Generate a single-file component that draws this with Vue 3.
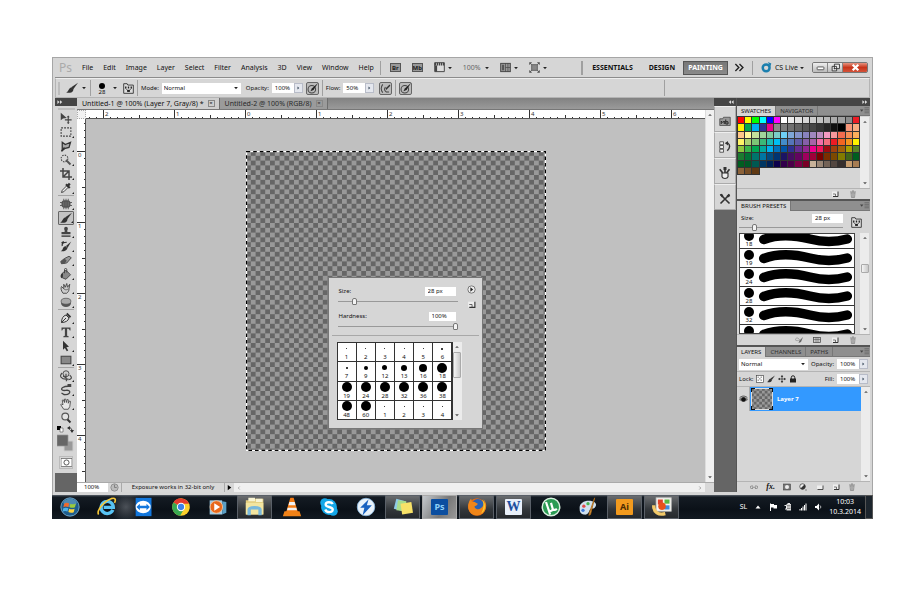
<script setup>
import { ref, computed, onMounted, onBeforeUnmount } from 'vue'

const arrow = '<path d="M3 5h10l-5 6z" fill="#222"/>'
const icons = {
  arrow,
  right: '<path d="M4 2l7 6-7 6z" fill="#345"/>',
  move: '<path d="M1 1v10l3-2.500 5-.5z" fill="#444"/><path d="M11 6v9M6.500 10.500h9" stroke="#444" stroke-width="1.500"/><path d="M9 7l2-2.500L13 7zM9 14l2 2 2-2z" fill="#444"/>',
  marquee: '<rect x="1.500" y="2.500" width="13" height="11" fill="none" stroke="#444" stroke-width="1.400" stroke-dasharray="2.500 1.500"/>',
  lasso: '<path d="M3 14V3l4 3 7-3-2 7-5 1z" fill="#aaa" stroke="#333" stroke-width="1.700"/><path d="M2 15l4-5" stroke="#333" stroke-width="2"/>',
  wand: '<circle cx="6" cy="6" r="4.500" fill="none" stroke="#444" stroke-width="1.400" stroke-dasharray="2 1.500"/><path d="M8 8l6 6" stroke="#555" stroke-width="2.600"/>',
  crop: '<path d="M4 0v12h12M0 4h12v12M12 4L4 12" fill="none" stroke="#444" stroke-width="2"/>',
  dropper: '<path d="M2 14l1-3 6-6 2 2-6 6z" fill="#eee" stroke="#333" stroke-width="1.200"/><path d="M8 3l5 5M10 6l3-4" stroke="#333" stroke-width="3"/>',
  heal: '<rect x="2" y="3" width="12" height="10" rx="4" fill="#555"/><path d="M5 1v14M8 1v14M11 1v14M0 6h16M0 10h16" stroke="#555" stroke-width="1.200"/><path d="M5 5v6M8 5v6M11 5v6" stroke="#888" stroke-width=".7"/>',
  brush: '<path d="M16 1L7 7l2.500 3z" fill="#333"/><path d="M0 14c3-.5 3-5 6-6.500 3-.5 4.500 2 3.500 4C8 14.500 4 15 0 14z" fill="#333"/>',
  stamp: '<path d="M6 8c1-2-.5-3-.5-4.500a2.500 2.500 0 015 0C10.500 5 9 6 10 8h4v3H2V8z" fill="#444"/><path d="M2 13.500h12" stroke="#444" stroke-width="2"/>',
  history: '<path d="M15 2L8 8l2 2.500z" fill="#333"/><path d="M1 15c3-1 2-5 6-7l3 2.500c-1 3-4 5-9 4.500z" fill="#333"/><path d="M3 8c-1-4 2-5 6-5M2 4l3-2" fill="none" stroke="#333" stroke-width="1.600"/>',
  eraser: '<path d="M6 6L12 3l3 2-6 7-7 1-1-3z" fill="#999" stroke="#444" stroke-width="1.200"/><path d="M1 10l5-4 3 3-3 4H2z" fill="#555"/>',
  bucket: '<path d="M3 7l5-4 6 6-6 6-5-2z" fill="#888" stroke="#444" stroke-width="1.200"/><path d="M4 7c-3 0-4 4-2.500 6S4 11 4 7z" fill="#333"/><path d="M6 7V2c0-2 3-2 3 0v4" fill="none" stroke="#444" stroke-width="1.300"/>',
  smudge: '<path d="M4 15c-3-4-3-7-2-9l3 3V3l2 4 2-5 1 5 3-4-1 6c0 3-1 4-3 6z" fill="#ccc" stroke="#444" stroke-width="1.200"/><path d="M5 9c2 2 4 2 6 0" stroke="#555" fill="none"/>',
  sponge: '<ellipse cx="8" cy="10" rx="6.500" ry="4.500" fill="#555"/><ellipse cx="8" cy="7" rx="6.500" ry="4" fill="#aaa" stroke="#555"/>',
  pen: '<path d="M2 14c0-5 2-9 6-10l4 4c-1 4-5 6-10 6zM2 14l6-6" fill="#ddd" stroke="#333" stroke-width="1.300"/><path d="M9 2l5 5" stroke="#333" stroke-width="2.400"/>',
  type: '<path d="M2 2h12v4h-1c-.5-2-1-2.500-3.500-2.500V13l2 .5V15h-7v-1.500l2-.5V3.500C4 3.500 3.500 4 3 6H2z" fill="#444"/>',
  pick: '<path d="M4 1l8 8-3.500.5L11 14l-2 1-2.500-4.500L4 13z" fill="#333"/>',
  rect: '<rect x="1.500" y="3" width="13" height="10" fill="#888" stroke="#444" stroke-width="1.400"/>',
  orbit: '<circle cx="8" cy="5" r="4" fill="#ccc" stroke="#444" stroke-width="1.200"/><path d="M3 4C-2 8 2 13 10 12l-2 3M13 7c4 3 2 6-2 6M4 8l5 3M8 5v4" fill="none" stroke="#444" stroke-width="1.500"/>',
  camera: '<path d="M11 3C5 3 0 6 3 8s6-1 9 1-1 6-6 5M2 12l4 2.500" fill="none" stroke="#444" stroke-width="1.700"/><path d="M10 0h5v4h-5z" fill="#444"/>',
  hand: '<path d="M5 15L1 9l1-1 2 1-1-6 1.500-.5L6 6V1.500h1.700L8.500 6l1-4 1.500.3V7l1.500-3 1.500.5-1 7-2 3.500z" fill="#e8e8e8" stroke="#444" stroke-width="1.100"/>',
  zoom: '<circle cx="7" cy="6" r="4.500" fill="#e4e4e4" stroke="#555" stroke-width="1.500"/><path d="M10 10l4 4" stroke="#333" stroke-width="2.600"/>',
  mask: '<rect x="0" y="2" width="16" height="12" fill="#fff" stroke="#555"/><circle cx="8" cy="8" r="3.700" fill="#fff" stroke="#555" stroke-width="1.400"/>',
  presets: '<path d="M1 1h5l1 2h8v12H1z" fill="#ddd" stroke="#333" stroke-width="1.300"/><path d="M4 5v3M8 5v3M12 5v3" stroke="#222" stroke-width="2"/><path d="M4 8l3 3M12 8l-3 3" stroke="#222"/><rect x="6" y="10" width="4" height="3" fill="#222"/>',
  tablet: '<circle cx="7" cy="9" r="5.500" fill="none" stroke="#444" stroke-width="1.500"/><path d="M16 0L7 8l-2 4 4.500-2z" fill="#222"/>',
  air: '<path d="M4 2c-3 4-3 8 0 12M8 6c-2 2-2 5 1 7h4" fill="none" stroke="#444" stroke-width="1.500"/><path d="M14 2L8 8l1 2 6-6z" fill="#333"/>',
  film: '<path d="M1 1h14v13H1z" fill="#ddd" stroke="#444" stroke-width="1.400"/><path d="M1 3h14" stroke="#444" stroke-width="4" stroke-dasharray="2 1"/><path d="M3 5v9" stroke="#444" stroke-width="3"/>',
  arrange: '<rect x="1" y="2" width="14" height="12" fill="#999" stroke="#444" stroke-width="1.400"/><path d="M8 2v12M11.500 2v12M8 8h7" stroke="#444"/><path d="M3 4h3v8H3z" fill="#555"/>',
  screen: '<rect x="4" y="4" width="8" height="8" fill="#888" stroke="#444"/><path d="M1 4V1h3M12 1h3v3M15 12v3h-3M4 15H1v-3M1 1l3 3M15 1l-3 3M1 15l3-3M15 15l-3-3" fill="none" stroke="#444" stroke-width="1.200"/>',
  live: '<circle cx="7.500" cy="8.500" r="5" fill="none" stroke="#1b7fae" stroke-width="3.600"/><path d="M10 0l5 2-1.500 5z" fill="#1b7fae"/>',
  bridge: '<path d="M1 5h4l1-2h9v11H1z" fill="#999" stroke="#444"/><path d="M3 12V8l2 2 2-2v4M9 6v6h3V9H9" fill="none" stroke="#222" stroke-width="1.300"/>',
  clone: '<path d="M1 1h5v4H1zM1 6h5v4H1zM1 11h5v4H1z" fill="#eee" stroke="#333"/><path d="M9 3h3c3 2 3 6-1 10" fill="none" stroke="#333" stroke-width="1.900"/><path d="M8 3l4-3v6z" fill="#333"/>',
  brushes: '<path d="M4 8h8v5c-1 3-7 3-8 0z" fill="#eee" stroke="#333" stroke-width="1.500"/><path d="M1 3l4 5M8 0v8M14 3l-4 5" stroke="#333" stroke-width="2.200"/><path d="M6 0h4v4H6z" fill="#333"/>',
  tools: '<path d="M2 2l12 12M14 2L2 14" stroke="#333" stroke-width="2.200"/><path d="M10 4l3-3 2 3-3 2zM1 2l3-1 2 3-2 2z" fill="#333"/>',
  page: '<path d="M2 3h12v10H2z" fill="#eee"/><path d="M14 3v10H4" fill="none" stroke="#333" stroke-width="2"/><path d="M4 8h5v5" fill="none" stroke="#444" stroke-width="1.400"/>',
  trash: '<path d="M2 4h12M6 2h4" stroke="#777" stroke-width="1.500"/><path d="M4 6l1 9h6l1-9z" fill="#ccc" stroke="#777" stroke-width="1.300"/><path d="M7 7v7M9 7v7" stroke="#888"/>',
  eyebrush: '<path d="M0 7c3-4 6-4 9 0-3 3-6 3-9 0z" fill="none" stroke="#888" stroke-width="1.300"/><path d="M16 2L9 9l-2 5 5-2z" fill="#666"/>',
  grid: '<rect x="1" y="3" width="14" height="10" fill="#ccc" stroke="#444" stroke-width="1.400"/><path d="M1 7h14M6 3v10M10 3v10" stroke="#444"/>',
  link: '<path d="M6 6H3a2.500 2.500 0 000 5h3M10 6h3a2.500 2.500 0 010 5h-3M4 8.500h8" fill="none" stroke="#777" stroke-width="1.500"/>',
  maskbtn: '<rect x="1" y="2" width="14" height="12" fill="#777" stroke="#333"/><circle cx="8" cy="8" r="4" fill="#eee"/>',
  adjust: '<circle cx="7" cy="7" r="5.500" fill="#eee" stroke="#333" stroke-width="1.400"/><path d="M11 3L3 11a5.500 5.500 0 008-8z" fill="#333"/><path d="M13 13h2v2h-2z" fill="#333"/>',
  folder: '<path d="M2 5h12v8H2z" fill="#eee"/><path d="M14 5v8H3" fill="none" stroke="#333" stroke-width="1.700"/>',
  checker: '<rect x="1" y="1" width="14" height="14" fill="#fff" stroke="#444" stroke-width="1.300"/><path d="M3 3h3v3H3zM9 3h3v3H9zM6 6h3v3H6zM3 9h3v3H3zM9 9h3v3H9z" fill="#aaa"/>',
  cross: '<path d="M8 1v14M1 8h14" stroke="#333" stroke-width="1.500"/><path d="M5.500 4L8 0l2.500 4zM5.500 12L8 16l2.500-4zM4 5.500L0 8l4 2.500zM12 5.500L16 8l-4 2.500z" fill="#333"/>',
  lock: '<path d="M2 7h12v8H2z" fill="#222"/><path d="M4.500 8V5a3.500 3.500 0 017 0v3" fill="none" stroke="#222" stroke-width="2"/>',
  eye: '<path d="M0 8c4-6 12-6 16 0-4 5-12 5-16 0z" fill="#777"/><circle cx="8" cy="8" r="4" fill="#111"/><path d="M1 5c4-4 10-4 14 0" fill="none" stroke="#222" stroke-width="1.400"/>',
  menu: '<path d="M0 6h6L3 10z" fill="#444"/><path d="M8 3h8M8 6h8M8 9h8M8 12h8" stroke="#555"/>',
  play: '<circle cx="8" cy="8" r="6.500" fill="#eee" stroke="#666" stroke-width="1.500"/><path d="M6 4l5 4-5 4z" fill="#222"/>',
  globe: '<circle cx="8" cy="8" r="6.500" fill="#bbb" stroke="#888" stroke-width="1.500"/><path d="M8 8V3M8 8h4" stroke="#777" stroke-width="1.500"/>',
  up: '<path d="M3 10l5-5 5 5z" fill="#555"/>',
  down: '<path d="M3 6l5 5 5-5z" fill="#555"/>',
  left: '<path d="M10 4L6 8l4 4" fill="none" stroke="#999" stroke-width="2"/>',
  next: '<path d="M6 4l4 4-4 4" fill="none" stroke="#888" stroke-width="2"/>',
}

const menus = ['File', 'Edit', 'Image', 'Layer', 'Select', 'Filter', 'Analysis', '3D', 'View', 'Window', 'Help']
const toolGroups = [
  ['move', 'marquee', 'lasso', 'wand', 'crop', 'dropper'],
  ['heal', 'brush', 'stamp', 'history', 'eraser', 'bucket', 'smudge', 'sponge'],
  ['pen', 'type', 'pick', 'rect'],
  ['orbit', 'camera', 'hand', 'zoom'],
]
const tool = ref('brush')

// Ruler marks: one inch is 71 px, split in tenths; only the visible stretch is drawn.
const inch = 71
const desk = ref(null)
const size = ref({ w: 0, h: 0 })
const marks = (zero, length) => {
  const out = []
  for (let i = Math.ceil((-zero * 10) / inch); zero + (i * inch) / 10 < length - 6; i++) {
    const major = i % 10 === 0
    out.push({ at: Math.round(zero + (i * inch) / 10), major, size: major ? 9 : i % 5 === 0 ? 4 : 2, label: Math.abs(i / 10) })
  }
  return out
}
const across = computed(() => marks(Math.floor((size.value.w - 300) / 2), size.value.w))
const downward = computed(() => marks(32, size.value.h))
let observer
onMounted(() => {
  const measure = () => { size.value = { w: desk.value.clientWidth, h: desk.value.clientHeight } }
  measure()
  observer = new ResizeObserver(measure)
  observer.observe(desk.value)
})
onBeforeUnmount(() => observer.disconnect())

const swatches = `f00 ff0 0f0 0ff 00f f0f fff ebebeb e1e1e1 d7d7d7 ccc c2c2c2 b7b7b7 acacac a0a0a0 8c8c8c ed1c24
fff200 00a651 00aeef 2e3192 ec008c 8a8a8a 7d7d7d 707070 626262 555 464646 363636 262626 111 000 f7977a f9ad81
fdc68a fff79a c4df9b a2d39c 82ca9d 7bcdc8 6ecff6 7ea7d8 8493ca 8882be a187be bc8dbf f49ac2 f6989d f26c4f f68e55 fbaf5c
fff467 acd372 7cc576 3bb878 1abbb4 00bff3 438cca 5574b9 605ca8 855fa8 a763a8 f06ea9 f26d7d ed1c24 f26522 f7941d fff200
8dc73f 39b54a 00a651 00a99d 00aeef 0072bc 0054a6 2e3192 662d91 92278f ec008c ed145b 9e0b0f a0410d a36209 aba000 598527
1a7b30 007236 00746b 0076a3 004b80 003471 1b1464 440e62 630460 9e005d 9e0039 790000 7b2e00 7d4900 827b00 406618 005e20
005e20 005826 005952 003663 002157 0d004c 32004b 4b0049 7b0046 7a0026 c7b299 998675 736357 534741 362f2d c69c6d a67c52
8c6239 754c24 603913`.split(/\s+/).map(c => '#' + c)

// The last row shows only the top of its stroke at the list's lower edge.
const presetRows = [18, 19, 24, 28, 32, '']
const tips = [
  [1, 1], [2, 1], [3, 1], [4, 1], [5, 1], [6, 2],
  [7, 2], [9, 4], [12, 5], [13, 6], [16, 8], [18, 10],
  [19, 10], [24, 10], [28, 10], [32, 10], [36, 10], [38, 10],
  [48, 10], [60, 10], [1, 1], [2, 1], [3, 1], [4, 1],
]

const apps = [
  { name: 'Start', svg: '<circle cx="12" cy="12" r="11" fill="#1d5c8c" stroke="#7fb4d6"/><ellipse cx="12" cy="7" rx="8" ry="5" fill="#6fa6c9" opacity=".6"/><path d="M5 8c2-1.500 4-1.500 6-.3L10 12c-2-1-4-1-6 .3z" fill="#f0692b"/><path d="M12.500 8c2 1 4 1 6.500-.3l-1 4.500c-2 1-4.500 1-6.500 0z" fill="#9bcb3c"/><path d="M4 13.500c2-1 4-1 6 0l-1 4c-2-1-4-1-6 .2z" fill="#4fb3ea"/><path d="M11 14c2 1 4.500 1 6.500 0l-1 4.300c-2 1-4.500 1-6.500-.2z" fill="#fcd23c"/>' },
  { name: 'Internet Explorer', svg: '<path d="M19 15.500a7.300 7.300 0 11.600-3H8" fill="none" stroke="#58c4f5" stroke-width="4"/><path d="M2 21C-1 17 8 5 17 2c5-1.500 6 1 4 5" fill="none" stroke="#f5c83a" stroke-width="2"/>' },
  { name: 'TeamViewer', svg: '<rect x="2" y="1" width="19" height="22" fill="#1277dd"/><ellipse cx="11" cy="12" rx="9" ry="7.500" fill="#fff"/><path d="M3 12l4-4v2.500h8V8l4 4-4 4v-2.500H7V16z" fill="#1277dd"/>' },
  { name: 'Chrome', svg: '<circle cx="12" cy="12" r="10.500" fill="#fbd02c"/><path d="M12 12L3 6.500A10.500 10.500 0 0121.500 8H12z" fill="#e33b2e"/><path d="M12 12L3 6.500a10.500 10.500 0 008 16l4.500-8z" fill="#39a852"/><circle cx="12" cy="12" r="5" fill="#fff"/><circle cx="12" cy="12" r="3.800" fill="#3d82e8"/>' },
  { name: 'Media Player', svg: '<path d="M2 4h15v17H2z" fill="#9fcbe4"/><path d="M17 5l5 1v13l-5 2z" fill="#5c9fc4"/><circle cx="10" cy="12" r="7.500" fill="#e8681a" stroke="#f7c9a0"/><path d="M7.500 7.500l7 4.500-7 4.500z" fill="#fff"/>' },
  { name: 'Explorer', open: true, svg: '<path d="M1 4h8l2-2h11v19H1z" fill="#e3cd7e"/><path d="M4 1h8v4H4zM13 2h8v4h-8z" fill="#f8f4d4"/><path d="M1 7h21v14H1z" fill="#f3e5a0"/><path d="M5 22v-7c0-3 13-3 13 0v7" fill="none" stroke="#79b8dc" stroke-width="4"/>' },
  { name: 'VLC', svg: '<path d="M10 1h4l5 17H5z" fill="#f57c14"/><path d="M8.800 6h6.400l1 4H7.800zM6.800 13h10.400l.8 3H6z" fill="#f2f2f2"/><path d="M3 17h18l2 6H1z" fill="#f08218"/>' },
  { name: 'Skype', svg: '<circle cx="12" cy="12" r="9.500" fill="#14a7e8"/><circle cx="7" cy="7" r="5.500" fill="#14a7e8"/><circle cx="17" cy="17" r="5.500" fill="#14a7e8"/><path d="M16.500 8.500C15 5.500 8 5.500 8 9c0 4 8.500 2 8.500 6.200 0 4-7.500 4-9-.2" fill="none" stroke="#fff" stroke-width="2.800"/>' },
  { name: 'DAEMON Tools', svg: '<circle cx="12" cy="12" r="10.500" fill="#e8f2fa" stroke="#8ab8e0"/><path d="M15 3L5 13h5l-2 9 11-12h-6z" fill="#1762c0"/>' },
  { name: 'Sticky Notes', open: true, svg: '<path d="M4 2l11 3-3 12L1 14z" fill="#8fcbe6"/><path d="M6 4l10 1-1 12L4 16z" fill="#a9dc8c"/><path d="M9 8l13-2 2 13-13 2z" fill="#f8e268"/>' },
  { name: 'Photoshop', active: true, label: 'Ps', bg: '#0b4ea0', fg: '#8ed0f8' },
  { name: 'Firefox', open: true, svg: '<circle cx="12" cy="12" r="10.500" fill="#e66a12"/><circle cx="13" cy="10" r="7.500" fill="#2a62b4"/><path d="M1.500 9C3 3 5 2 5 2l1 4c4-1 5 2 7 2-1 3-4 2-4 4 2 4 8 4 11-3 2-3 0-6-1-7 6 5 5 14-1 18-8 5-18 0-16.500-11z" fill="#f0861a"/><path d="M18 3c5 4 5 13-1 17 3-6 4-11 1-17z" fill="#fbc92e"/>' },
  { name: 'Word', open: true, label: 'W', bg: '#e9f0fa', fg: '#1c4f9f' },
  { name: 'uTorrent', svg: '<circle cx="12" cy="12" r="10.500" fill="#2b9b54" stroke="#d8f0df" stroke-width="1.800"/><path d="M6 6l3 9c1 3 5 2 5-1l-2-7M14 14c1 2 3 2 5 0M8 12l3 9" fill="none" stroke="#fff" stroke-width="2.600"/>' },
  { name: 'Paint', svg: '<path d="M2 14C1 7 9 3 17 5c5 1 6 5 3 8-2 2-5 0-6 3s-3 6-7 5-5-3-5-7z" fill="#cfe0ee"/><circle cx="7" cy="11" r="2" fill="#e04848"/><circle cx="12" cy="8" r="2" fill="#48b050"/><circle cx="6" cy="16" r="2" fill="#3b78d8"/><path d="M20 1l-5 20-2 1 1-4z" fill="#e2a04a" stroke="#a86818"/>' },
  { name: 'Illustrator', open: true, label: 'Ai', bg: '#f29a1e', fg: '#4a2a02' },
  { name: 'Image Viewer', open: true, svg: '<rect x="5" y="1" width="18" height="16" fill="#f6f6f0" stroke="#ccc"/><path d="M7 3h6v6H7z" fill="#e0432c"/><path d="M15 3h6v5h-6z" fill="#5db843"/><path d="M15 10h6v5h-6z" fill="#3f8ae0"/><circle cx="12" cy="11" r="4.500" fill="#e8511c"/><path d="M2 10c0 9 6 12 14 10" fill="none" stroke="#f2c96a" stroke-width="4"/>' },
]

const tray = [
  '<path d="M3 11l5-6 5 6z" fill="#fff"/>',
  '<path d="M3 1v15" stroke="#fff" stroke-width="2"/><path d="M4 2h6v2h6v7H9V9H4z" fill="#fff"/>',
  '<rect x="5" y="2" width="9" height="13" fill="#ddd"/><path d="M7 6h5M7 9h5M1 5h4v7H2M7 1h5" stroke="#fff" stroke-width="1.800" fill="none"/><path d="M6 5h7M6 8h7M6 11h7" stroke="#333"/>',
  '<path d="M2 15v-3M5 15v-5M8 15V7M11 15V4M14 15V1" stroke="#fff" stroke-width="2"/>',
  '<path d="M2 6h3l5-5v14l-5-5H2z" fill="#fff"/><path d="M12 5c2 2 2 4 0 6" fill="none" stroke="#fff" stroke-width="1.500"/>',
]

const blend = ref('Normal')
const mode = ref('Normal')
</script>

<template>
  <main class="page">
    <div class="window">
      <header class="menubar">
        <span class="logo">Ps</span>
        <nav class="menus"><a v-for="m in menus" :key="m" href="#">{{ m }}</a></nav>
        <i class="bar"></i>
        <div class="quick">
          <button class="chip" aria-label="Bridge">Br</button>
          <button class="chip" aria-label="Mini Bridge">Mb</button>
          <button class="pair" aria-label="View extras"><svg class="i11" viewBox="0 0 16 16" v-html="icons.film" /><svg class="i6" viewBox="0 0 16 16" v-html="arrow" /></button>
          <button class="pair muted">100%<svg class="i6" viewBox="0 0 16 16" v-html="arrow" /></button>
          <button class="pair" aria-label="Arrange documents"><svg class="i11" viewBox="0 0 16 16" v-html="icons.arrange" /><svg class="i6" viewBox="0 0 16 16" v-html="arrow" /></button>
          <button class="pair" aria-label="Screen mode"><svg class="i11" viewBox="0 0 16 16" v-html="icons.screen" /><svg class="i6" viewBox="0 0 16 16" v-html="arrow" /></button>
        </div>
        <div class="spaces">
          <i class="bar thick"></i>
          <button>ESSENTIALS</button>
          <button>DESIGN</button>
          <button class="on">PAINTING</button>
          <button class="more" aria-label="More workspaces"><svg class="i11" viewBox="0 0 16 16"><path d="M2 3l5 5-5 5M8 3l5 5-5 5" fill="none" stroke="#222" stroke-width="2" /></svg></button>
          <i class="bar"></i>
          <button class="live"><svg class="i11" viewBox="0 0 16 16" v-html="icons.live" />CS Live<svg class="i6" viewBox="0 0 16 16" v-html="arrow" /></button>
        </div>
        <div class="controls">
          <button aria-label="Minimise"><svg class="i9" viewBox="0 0 16 16"><rect x="2" y="7" width="12" height="5" rx="1" fill="#fff" stroke="#444" stroke-width="1.500" /></svg></button>
          <button aria-label="Restore"><svg class="i9" viewBox="0 0 16 16"><path d="M6 2h9v8H6zM2 6h8v8H2z" fill="#eee" stroke="#333" stroke-width="1.600" /><path d="M5 9h2v2H5z" fill="#333" /></svg></button>
          <button class="close" aria-label="Close"><svg class="i9" viewBox="0 0 16 16"><path d="M3 3l10 10M13 3L3 13" stroke="#fff" stroke-width="4" /></svg></button>
        </div>
      </header>

      <section class="options">
        <i class="grip"></i>
        <svg class="i12" viewBox="0 0 16 16" v-html="icons.brush" />
        <svg class="i6" viewBox="0 0 16 16" v-html="arrow" />
        <i class="bar"></i>
        <span class="tip"><i></i>28</span>
        <svg class="i6" viewBox="0 0 16 16" v-html="arrow" />
        <svg class="i11 gap" viewBox="0 0 16 16" v-html="icons.presets" />
        <i class="bar"></i>
        <label for="mode">Mode:</label>
        <span class="pick wide"><select id="mode" v-model="mode"><option>Normal</option></select><svg class="i6" viewBox="0 0 16 16" v-html="arrow" /></span>
        <label for="opacity">Opacity:</label>
        <span class="field"><input id="opacity" value="100%" /><svg viewBox="0 0 16 16" v-html="icons.right" /></span>
        <button class="toggle" aria-label="Pressure opacity"><svg class="i11" viewBox="0 0 16 16" v-html="icons.tablet" /></button>
        <i class="bar"></i>
        <label for="flow">Flow:</label>
        <span class="field"><input id="flow" value="50%" /><svg viewBox="0 0 16 16" v-html="icons.right" /></span>
        <button class="toggle next" aria-label="Airbrush"><svg class="i11" viewBox="0 0 16 16" v-html="icons.air" /></button>
        <i class="bar"></i>
        <button class="toggle" aria-label="Pressure size"><svg class="i11" viewBox="0 0 16 16" v-html="icons.tablet" /></button>
        <i class="bar far"></i>
      </section>

      <div class="work">
        <aside class="tools">
          <div class="darkcap"><svg class="i6" viewBox="0 0 16 16"><path d="M1 3l6 5-6 5zM8 3l6 5-6 5z" fill="#ddd" /></svg></div>
          <div class="toolbox">
            <i class="handle"></i>
            <div v-for="(g, n) in toolGroups" :key="n" class="group">
              <button v-for="t in g" :key="t" :class="{ on: t === tool, plain: t === 'move' || t === 'zoom' }" :aria-label="t" @click="tool = t"><svg class="i12" viewBox="0 0 16 16" v-html="icons[t]" /></button>
            </div>
            <svg class="colors" viewBox="0 0 18 28">
              <path d="M0 1h4v4H0z" fill="#000" /><path d="M3 3h3v4H3z" fill="#fff" stroke="#333" stroke-width=".5" />
              <path d="M11 3c3-1 4 1 4 4" fill="none" stroke="#333" /><path d="M10 3l3-2v4zM13 5h4l-2 3z" fill="#333" />
              <path d="M7 16h9v10H7z" fill="#999" stroke="#ccc" /><path d="M0 10h11v11H0z" fill="#666" stroke="#999" stroke-width=".7" />
            </svg>
            <button class="quickmask" aria-label="Quick mask"><svg class="i11" viewBox="0 0 16 16" v-html="icons.mask" /></button>
          </div>
        </aside>

        <section class="docs">
          <div class="tabs">
            <button class="on">Untitled-1 @ 100% (Layer 7, Gray/8) *<span>×</span></button>
            <button>Untitled-2 @ 100% (RGB/8)<span>×</span></button>
          </div>
          <div class="sheet">
            <div class="corner"></div>
            <svg class="ruler-x">
              <g v-for="m in across" :key="m.at">
                <rect :x="m.at" :y="9 - m.size" width="1" :height="m.size" fill="#333" />
                <text v-if="m.major" :x="m.at + 2" y="6">{{ m.label }}</text>
              </g>
            </svg>
            <div class="vscroll"><svg viewBox="0 0 16 16" v-html="icons.up" /><svg viewBox="0 0 16 16" v-html="icons.down" /></div>
            <svg class="ruler-y">
              <g v-for="m in downward" :key="m.at">
                <rect :x="9 - m.size" :y="m.at" :width="m.size" height="1" fill="#333" />
                <text v-if="m.major" x="1" :y="m.at + 6">{{ m.label }}</text>
              </g>
            </svg>
            <div ref="desk" class="desk">
              <div class="art">
                <svg viewBox="0 0 500 500">
                  <defs><pattern id="alpha" width="16" height="16" patternUnits="userSpaceOnUse"><path d="M0 0h16v16H0z" fill="#999" /><path d="M8 0h8v8H8zM0 8h8v8H0z" fill="#666" /></pattern></defs>
                  <rect width="500" height="500" fill="url(#alpha)" />
                  <rect x="1" y="1" width="498" height="498" fill="none" stroke="#fff" stroke-width="2" />
                  <rect x="1" y="1" width="498" height="498" fill="none" stroke="#000" stroke-width="2" stroke-dasharray="6 5" />
                </svg>
                <form class="popup" @submit.prevent>
                  <div class="line"><label for="psize">Size:</label><input id="psize" class="val" value="28 px" /></div>
                  <input class="slide" type="range" min="0" max="100" value="13" aria-label="Brush size" />
                  <div class="line second"><label for="phard">Hardness:</label><input id="phard" class="val small" value="100%" /></div>
                  <input class="slide" type="range" min="0" max="100" value="100" aria-label="Brush hardness" />
                  <div class="side"><button type="button" aria-label="Menu"><svg class="i9" viewBox="0 0 16 16" v-html="icons.play" /></button><button type="button" aria-label="New preset"><svg class="i9" viewBox="0 0 16 16" v-html="icons.page" /></button></div>
                  <hr />
                  <div class="tipbox">
                    <div class="tipgrid">
                      <button v-for="(t, n) in tips" :key="n" type="button"><span><i :style="{ width: t[1] + 'px', height: t[1] + 'px' }"></i></span>{{ t[0] }}</button>
                    </div>
                    <div class="scroll"><svg viewBox="0 0 16 16" v-html="icons.up" /><b></b><svg viewBox="0 0 16 16" v-html="icons.down" /></div>
                  </div>
                </form>
              </div>
            </div>
          </div>
          <footer class="status">
            <input aria-label="Zoom" value="100%" />
            <svg class="i9 globe" viewBox="0 0 16 16" v-html="icons.globe" />
            <span class="msg">Exposure works in 32-bit only</span>
            <button aria-label="Status menu"><svg viewBox="0 0 16 16"><path d="M4 2l8 6-8 6z" fill="#000" /></svg></button>
            <div class="hscroll"><svg viewBox="0 0 16 16" v-html="icons.left" /><svg viewBox="0 0 16 16" v-html="icons.next" /></div>
          </footer>
        </section>

        <aside class="dock">
          <div class="darkcap end"><svg class="i6" viewBox="0 0 16 16"><path d="M8 3L2 8l6 5zM15 3L9 8l6 5z" fill="#ddd" /></svg></div>
          <div class="dockicons">
            <button v-for="d in ['bridge', 'clone', 'brushes', 'tools']" :key="d" :aria-label="d"><svg class="i12" viewBox="0 0 16 16" v-html="icons[d]" /></button>
          </div>
        </aside>

        <aside class="panels">
          <div class="darkcap end"><svg class="i6" viewBox="0 0 16 16"><path d="M1 3l6 5-6 5zM8 3l6 5-6 5z" fill="#ddd" /></svg></div>
          <section class="panel">
            <div class="ptabs"><button class="on">SWATCHES</button><button>NAVIGATOR</button><svg class="i9" viewBox="0 0 16 16" v-html="icons.menu" /></div>
            <div class="swbody">
              <div class="swgrid"><i v-for="(c, n) in swatches" :key="n" :style="{ background: c }"></i></div>
              <div class="scroll"><svg viewBox="0 0 16 16" v-html="icons.up" /><svg viewBox="0 0 16 16" v-html="icons.down" /></div>
            </div>
            <div class="pfoot end"><svg viewBox="0 0 16 16" v-html="icons.page" /><svg viewBox="0 0 16 16" v-html="icons.trash" /></div>
          </section>
          <section class="panel">
            <div class="ptabs"><button class="on">BRUSH PRESETS</button><svg class="i9" viewBox="0 0 16 16" v-html="icons.menu" /></div>
            <div class="bhead">
              <div class="bsize">
                <div class="line"><label for="bsize">Size:</label><input id="bsize" class="val" value="28 px" /></div>
                <input class="slide" type="range" min="0" max="100" value="13" aria-label="Preset size" />
              </div>
              <svg class="i11" viewBox="0 0 16 16" v-html="icons.presets" />
            </div>
            <div class="bbody">
              <ul class="blist">
                <li v-for="p in presetRows" :key="p">
                  <span><i></i>{{ p }}</span>
                  <svg viewBox="0 0 100 19" preserveAspectRatio="none"><path d="M6 10C22 4 40 6 54 9.500S80 13 93 9.500" fill="none" stroke="#000" stroke-width="10" stroke-linecap="round" /></svg>
                </li>
              </ul>
              <div class="scroll"><svg viewBox="0 0 16 16" v-html="icons.up" /><b class="mid"></b><svg viewBox="0 0 16 16" v-html="icons.down" /></div>
            </div>
            <div class="pfoot end"><svg viewBox="0 0 16 16" v-html="icons.eyebrush" /><svg viewBox="0 0 16 16" v-html="icons.grid" /><svg viewBox="0 0 16 16" v-html="icons.page" /><svg viewBox="0 0 16 16" v-html="icons.trash" /></div>
          </section>
          <section class="panel layers">
            <div class="ptabs"><button class="on">LAYERS</button><button>CHANNELS</button><button>PATHS</button><svg class="i9" viewBox="0 0 16 16" v-html="icons.menu" /></div>
            <div class="lrow">
              <span class="pick"><select v-model="blend" aria-label="Blend mode"><option>Normal</option></select><svg class="i6" viewBox="0 0 16 16" v-html="arrow" /></span>
              <label for="lop">Opacity:</label>
              <span class="field"><input id="lop" value="100%" /><svg viewBox="0 0 16 16" v-html="icons.right" /></span>
            </div>
            <div class="lrow locks">
              <span>Lock:</span>
              <button aria-label="Lock transparency"><svg class="i8" viewBox="0 0 16 16" v-html="icons.checker" /></button>
              <button aria-label="Lock pixels"><svg class="i8" viewBox="0 0 16 16" v-html="icons.brush" /></button>
              <button aria-label="Lock position"><svg class="i8" viewBox="0 0 16 16" v-html="icons.cross" /></button>
              <button aria-label="Lock all"><svg class="i8" viewBox="0 0 16 16" v-html="icons.lock" /></button>
              <label for="lfill">Fill:</label>
              <span class="field"><input id="lfill" value="100%" /><svg viewBox="0 0 16 16" v-html="icons.right" /></span>
            </div>
            <div class="lbody">
              <ul>
                <li>
                  <span class="eye"><svg class="i9" viewBox="0 0 16 16" v-html="icons.eye" /></span>
                  <a class="layer" href="#"><svg class="thumb" viewBox="0 0 22 22"><rect width="22" height="22" fill="#999" /><g fill="#666"><template v-for="y in 8"><rect v-for="x in 4" :key="x + '-' + y" :x="(x - 1) * 5.5 + (y % 2 ? 0 : 2.75)" :y="(y - 1) * 2.75" width="2.75" height="2.75" /></template></g><rect x=".5" y=".5" width="21" height="21" fill="none" stroke="#111" /><path d="M4 .5h14M4 21.500h14M.5 4v14M21.500 4v14" stroke="#ddd" stroke-dasharray="14" /></svg>Layer 7</a>
                </li>
              </ul>
              <div class="scroll"><svg viewBox="0 0 16 16" v-html="icons.up" /><svg viewBox="0 0 16 16" v-html="icons.down" /></div>
            </div>
            <div class="pfoot">
              <svg viewBox="0 0 16 16" v-html="icons.link" />
              <span class="fx">fx.</span>
              <svg v-for="f in ['maskbtn', 'adjust', 'folder', 'page', 'trash']" :key="f" viewBox="0 0 16 16" v-html="icons[f]" />
            </div>
          </section>
        </aside>
      </div>
    </div>

    <footer class="taskbar">
      <button v-for="a in apps" :key="a.name" :class="{ open: a.open, active: a.active }" :aria-label="a.name">
        <svg v-if="a.svg" viewBox="0 0 24 24" v-html="a.svg" />
        <b v-else :class="{ word: a.label === 'W' }" :style="{ background: a.bg, color: a.fg }">{{ a.label }}</b>
      </button>
      <div class="tray">
        <span class="lang">SL</span>
        <svg v-for="(t, n) in tray" :key="n" viewBox="0 0 16 16" v-html="t" />
        <time>10:03<br />10.3.2014</time>
        <button class="peek" aria-label="Show desktop"></button>
      </div>
    </footer>
  </main>
</template>

<style>
body { background: #fff; }
</style>

<style scoped>
* { box-sizing: border-box; }
.page { padding: 57px 27px 57px 52px; font: 6px/8px "Noto Sans", "Open Sans", sans-serif; color: #111; }
button, input, select { font: inherit; color: inherit; border: 0; padding: 0; margin: 0; background: none; border-radius: 0; }
a { color: inherit; text-decoration: none; }
ul { list-style: none; margin: 0; padding: 0; }
svg { display: block; flex: none; }
button { display: flex; align-items: center; justify-content: center; white-space: nowrap; }
.i6 { width: 6px; height: 6px; }
.i8 { width: 8px; height: 8px; }
.i9 { width: 9px; height: 9px; }
.i11 { width: 11px; height: 11px; }
.i12 { width: 12px; height: 12px; }

.window { background: #d6d6d6; border: solid #a6a6a6; border-width: 1px 1px 0; padding: 0 2px 3px; }
.menubar { display: flex; align-items: center; height: 20px; font-size: 7px; border-bottom: 1px solid #8c8c8c; padding-left: 4px; }
.logo { font-size: 12px; width: 23px; color: #aaa; }
.menus { display: flex; gap: 10px; }
.bar { width: 1px; height: 14px; background: #a0a0a0; flex: none; }
.menubar > .bar { margin: 0 9px 0 6px; }
.quick { display: flex; align-items: center; gap: 11px; }
.chip { width: 11px; height: 9px; background: #999; border: 1px solid #555; font-weight: bold; font-size: 6px; color: #222; }
.pair { gap: 2px; }
.pair .i6 { margin-right: -1px; }
.muted { color: #666; gap: 3px; }
.spaces { display: flex; align-items: center; margin-left: auto; font-weight: bold; }
.thick { width: 2px; margin-right: 1px; }
.spaces button { height: 14px; padding: 0 8px; }
.spaces .on { background: linear-gradient(#777, #8a8a8a); color: #fff; border: 1px solid #555; padding: 0 4px; }
.spaces .more { padding: 0 7px 0 6px; }
.spaces .live { font-weight: normal; padding: 0 7px 0 8px; gap: 3px; }
.live .i6 { margin-left: -2px; }
.controls { display: flex; height: 11px; border: 1px solid #777; border-radius: 2px; overflow: hidden; margin-right: 2px; }
.controls button { width: 15px; border-right: 1px solid #888; background: linear-gradient(#eee, #bbb); }
.controls .close { width: 24px; border: 0; background: linear-gradient(#e6937f, #c8341a 50%, #d4533a); }

.options { display: flex; align-items: center; height: 20px; border: 1px solid #b4b4b4; border-top-color: #eee; padding-left: 2px; gap: 3px; }
.grip { width: 2px; height: 13px; background: #bcbcbc; margin-right: 3px; }
.options .bar { height: 16px; }
.options .far { margin-left: auto; margin-right: 204px; }
.tip { display: flex; flex-direction: column; align-items: center; width: 14px; line-height: 7px; margin-left: 1px; }
.tip i { width: 6px; height: 6px; border-radius: 50%; background: #000; margin-top: 2px; }
.gap { margin-left: 2px; }
.pick { display: flex; align-items: center; background: #fff; height: 11px; padding-right: 2px; }
.pick select { appearance: none; flex: 1; min-width: 0; padding-left: 2px; outline: 0; }
.wide { width: 79px; margin-right: 2px; }
.field { display: flex; background: #fff; height: 10px; width: 31px; }
.field input { flex: 1; min-width: 0; padding-left: 3px; }
.field svg { width: 9px; height: 10px; padding: 2px 1px; background: #e4e7ee; border: 1px solid #b8bcc8; }
.toggle { width: 13px; height: 13px; border: 1px solid #666; border-radius: 2px; background: #bbb; }
.next { margin-left: 2px; }

.work { display: grid; grid-template-columns: 22px minmax(0, 1fr) 22px 134px; }
.darkcap { height: 8px; background: #454545; display: flex; align-items: center; padding: 0 2px; }
.darkcap.end { justify-content: flex-end; }
.tools, .dock { background: #656565; }
.toolbox { background: #d6d6d6; display: flex; flex-direction: column; align-items: center; padding: 2px 0 4px; }
.handle { width: 17px; height: 2px; background: #bdbdbd; margin-bottom: 1px; }
.group + .group { border-top: 1px solid #a4a4a4; padding-top: 1px; }
.group button { width: 16px; height: 14px; position: relative; }
.group button.on { border: 1px solid #666; background: #c4c4c4; border-radius: 1px; }
.group button:not(.plain)::after { content: ""; position: absolute; right: 0; bottom: 1px; border: 1px solid #222; border-top-color: transparent; border-left-color: transparent; }
.colors { width: 18px; height: 28px; }
.quickmask { margin-top: 3px; width: 14px; height: 13px; border: 1px solid #bbb; }

.docs { display: flex; flex-direction: column; min-width: 0; }
.tabs { display: flex; height: 12px; background: linear-gradient(#828282, #9a9a9a); border-bottom: 1px solid #777; font-size: 7px; }
.tabs button { padding: 0 4px 0 5px; gap: 4px; color: #2a2a2a; background: #9b9b9b; border-right: 1px solid #6e6e6e; }
.tabs .on { background: #cfcfcf; color: #111; }
.tabs span { width: 7px; height: 7px; line-height: 5px; border: 1px solid #888; font-size: 6px; }
.sheet { display: grid; grid-template: 9px 1fr / 9px minmax(0, 1fr) 9px; flex: 1; }
.corner { background: #f2f2f2; border: 1px dotted #aaa; }
.ruler-x { width: 100%; height: 9px; background: #fff; border-bottom: 1px solid #555; }
.ruler-y { grid-row: 2; grid-column: 1; width: 9px; height: 100%; background: #fff; border-right: 1px solid #555; }
text { font-size: 6px; fill: #333; }
.vscroll { grid-column: 3; grid-row: 1 / 3; background: #f0f0f0; display: flex; flex-direction: column; justify-content: space-between; padding: 2px 1px; border-left: 1px solid #ddd; }
.vscroll svg, .hscroll svg { width: 6px; height: 6px; }
.desk { background: #c0c0c0; display: flex; align-items: center; justify-content: center; padding: 32px 20px 31px; }
.art { position: relative; width: 300px; }
.art > svg { width: 100%; }
.status { display: flex; height: 10px; border-top: 1px solid #aaa; background: #d8d8d8; line-height: 9px; }
.status input { width: 31px; background: #fff; padding-left: 7px; }
.globe { margin: 0 2px; }
.msg { width: 104px; text-align: center; border: solid #aaa; border-width: 0 1px; }
.status button { width: 9px; }
.status button svg { width: 7px; height: 7px; }
.hscroll { flex: 1; background: #f0f0f0; display: flex; justify-content: space-between; align-items: center; margin-right: 9px; padding: 0 2px; }

.popup { position: absolute; left: 82px; top: 126px; width: 155px; padding: 8px 26px 8px 8px; background: #d6d6d6; border: 1px solid #f0f0f0; outline: 1px solid #777; outline-offset: -1px; }
.line { display: flex; justify-content: space-between; align-items: center; padding-left: 2px; height: 10px; }
.val { background: #fff; width: 31px; height: 9px; padding-left: 3px; }
.small { width: 27px; }
.slide { display: block; appearance: none; width: 120px; height: 9px; margin: 1px 0 0 1px; background: linear-gradient(#999, #999) center / 100% 1px no-repeat; }
.slide::-webkit-slider-thumb { appearance: none; width: 5px; height: 7px; background: #f4f4f4; border: 1px solid #777; border-radius: 2px 2px 1px 1px; }
.second { margin-top: 5px; }
.side { position: absolute; right: 6px; top: 7px; display: grid; gap: 6px; }
.popup hr { border: 0; border-top: 1px solid #a8a8a8; margin: 4px -23px 6px -5px; }
.tipbox { display: flex; width: 125px; height: 78px; }
.tipgrid { display: grid; grid-template: repeat(4, 1fr) / repeat(6, 1fr); gap: 1px; padding: 1px; background: #333; width: 116px; }
.tipgrid button { background: #fff; flex-direction: column; min-width: 0; justify-content: flex-start; line-height: 7px; }
.tipgrid span { height: 11px; display: flex; align-items: center; flex: none; }
.tipgrid i { background: #000; border-radius: 50%; }
.scroll { width: 9px; background: #ececec; display: flex; flex-direction: column; align-items: center; padding: 2px 0; flex: none; }
.scroll svg { width: 6px; height: 6px; }
.scroll svg:last-child { margin-top: auto; }
.scroll b { width: 8px; height: 26px; background: linear-gradient(90deg, #f4f4f4, #c8c8c8); border: 1px solid #aaa; border-radius: 1px; margin-top: 2px; }
.scroll .mid { height: 9px; margin-top: 23px; }

.dockicons { background: #d6d6d6; }
.dockicons button { width: 100%; height: 26px; border: 1px solid #aaa; border-top-color: #eee; padding-top: 4px; }
.panels { display: flex; flex-direction: column; background: #d6d6d6; border-left: 1px solid #555; }
.panel + .panel { border-top: 2px solid #555; }
.ptabs { display: flex; height: 10px; background: #8f8f8f; border-bottom: 1px solid #777; align-items: stretch; }
.ptabs button { padding: 0 4px; color: #303030; border-right: 1px solid #777; height: 10px; }
.ptabs .on { background: #d6d6d6; color: #111; }
.ptabs svg { margin-left: auto; margin-right: 1px; }
.swbody, .bbody, .lbody { display: flex; }
.swbody { padding: 1px 1px 0; height: 72px; }
.swgrid { flex: 1; display: grid; grid-template-columns: repeat(17, 1fr); grid-auto-rows: 1fr; height: 58px; gap: 1px; padding-bottom: 1px; align-self: flex-start; }
.swgrid i { outline: 1px solid #333; }
.swbody .scroll { margin-left: 1px; }
.pfoot { display: flex; align-items: center; justify-content: space-around; height: 11px; padding: 0 10px 0 9px; border-top: 1px solid #b4b4b4; }
.pfoot svg { width: 8px; height: 8px; }
.pfoot.end { justify-content: flex-end; gap: 10px; padding: 0 13px 0 0; }
.fx { font: italic bold 8px/8px "Liberation Serif", serif; }
.bhead { display: flex; align-items: center; padding: 1px 8px 0 2px; height: 22px; gap: 8px; }
.bsize { flex: 1; }
.bsize .slide { width: 100%; margin: 0; }
.bbody { height: 101px; padding: 0 1px 0 2px; }
.blist { flex: 1; overflow: hidden; border: 1px solid #444; background: #fff; }
.blist li { display: flex; height: 19px; border-bottom: 1px solid #333; }
.blist li:first-child { margin-top: -4px; }
.blist span { width: 18px; display: flex; flex-direction: column; align-items: center; line-height: 7px; }
.blist i { width: 10px; height: 10px; border-radius: 50%; background: #000; margin-top: 1px; }
.blist li > svg { flex: 1; min-width: 0; height: 18px; }
.bbody .scroll { margin-left: 5px; }
.layers { flex: 1; display: flex; flex-direction: column; }
.lrow { display: flex; align-items: center; padding: 1px 2px; height: 15px; gap: 3px; border-bottom: 1px solid #b4b4b4; }
.lrow .pick { flex: 1; min-width: 0; }
.locks label { margin-left: auto; }
.lbody { flex: 1; }
.lbody ul { flex: 1; }
.lbody li { display: flex; height: 24px; }
.eye { width: 13px; display: flex; align-items: center; justify-content: center; border-right: 1px solid #aaa; }
.layer { flex: 1; background: #3399ff; color: #fff; font-weight: bold; display: flex; align-items: center; gap: 4px; padding-left: 1px; }
.thumb { width: 22px; height: 22px; }

.taskbar { display: flex; align-items: stretch; height: 24px; gap: 2px; background: radial-gradient(circle at 74px 12px, #6b7077aa, transparent 16px), linear-gradient(#59616a, #141b23 2px, #0b1118 60%, #121a22); }
.taskbar > button { width: 35px; }
.taskbar > button svg { width: 20px; height: 20px; }
.taskbar .open { border: 1px solid #5a6068; background: linear-gradient(#6a6d70, #33373b 60%, #25292d); }
.taskbar .active { border: 1px solid #aaa; background: linear-gradient(120deg, #c4c8cc, #777 60%, #999); }
.taskbar b { width: 17px; height: 16px; font-size: 9px; line-height: 16px; border-radius: 1px; }
.taskbar .word { font-family: "Liberation Serif", serif; font-size: 14px; }
.tray { margin-left: auto; display: flex; align-items: center; gap: 7px; color: #fff; font-size: 7px; line-height: 10px; text-align: center; }
.tray svg { width: 8px; height: 8px; }
.peek { align-self: stretch; width: 8px; border: 1px solid #555; background: #1d252d; margin-left: -3px; }
</style>
